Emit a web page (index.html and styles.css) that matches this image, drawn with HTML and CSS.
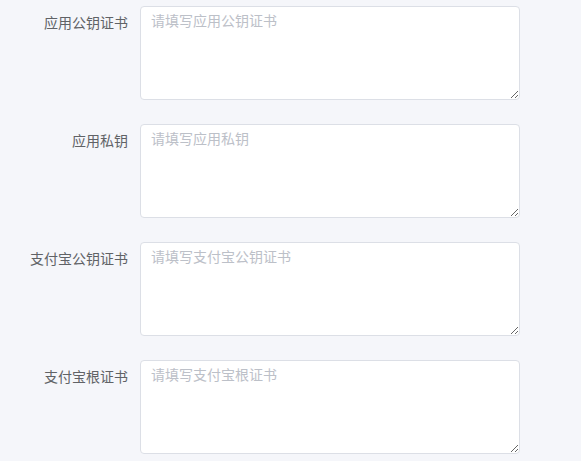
FILE: index.html
```html
<!DOCTYPE html>
<html lang="zh-CN">
<head>
<meta charset="utf-8">
<link rel="stylesheet" href="styles.css">
</head>
<body>
<form class="form">
  <div class="item">
    <label class="label">应用公钥证书</label>
    <textarea class="input" placeholder="请填写应用公钥证书"></textarea>
  </div>
  <div class="item">
    <label class="label">应用私钥</label>
    <textarea class="input" placeholder="请填写应用私钥"></textarea>
  </div>
  <div class="item">
    <label class="label">支付宝公钥证书</label>
    <textarea class="input" placeholder="请填写支付宝公钥证书"></textarea>
  </div>
  <div class="item">
    <label class="label">支付宝根证书</label>
    <textarea class="input" placeholder="请填写支付宝根证书"></textarea>
  </div>
</form>
</body>
</html>
```
FILE: styles.css
```css
html, body {
  margin: 0;
  padding: 0;
  background: #f5f6fa;
  font-family: "Noto Sans CJK SC", "Noto Sans", sans-serif;
  font-size: 14px;
  color: #606266;
}
.form {
  padding-top: 6px;
  display: flex;
  flex-direction: column;
  gap: 24px;
}
.item {
  display: flex;
  align-items: flex-start;
}
.label {
  width: 140px;
  box-sizing: border-box;
  padding-right: 12px;
  text-align: right;
  line-height: 32px;
  color: #606266;
}
.input {
  width: 380px;
  height: 94px;
  box-sizing: border-box;
  margin: 0;
  padding: 3px 10px;
  border: 1px solid #dcdfe6;
  border-radius: 4px;
  background: #fff;
  font-family: inherit;
  font-size: 14px;
  line-height: 21px;
  color: #606266;
  resize: vertical;
  outline: none;
}
.input::placeholder {
  color: #bcc0c8;
}
```
